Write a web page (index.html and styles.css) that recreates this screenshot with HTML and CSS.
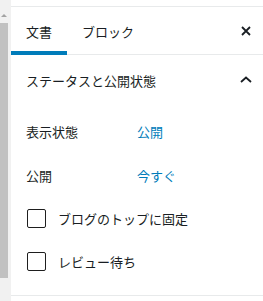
FILE: index.html
```html
<!DOCTYPE html>
<html lang="ja">
<head>
    <meta charset="UTF-8">
    <meta name="viewport" content="width=device-width, initial-scale=1.0">
    <title>文書設定</title>
    <link rel="stylesheet" href="styles.css">
</head>
<body>
    <div class="layout">
        <div class="scrollbar">
            <div class="scroll-arrow"></div>
            <div class="scroll-thumb"></div>
        </div>

        <div class="sidebar">
            <div class="sidebar-header">
                <div class="tabs">
                    <button class="tab active">文書</button>
                    <button class="tab">ブロック</button>
                </div>
                <button class="icon-btn close-btn" aria-label="閉じる">
                    <svg width="10" height="10" viewBox="0 0 10 10">
                        <path d="M1 1 L9 9 M9 1 L1 9" stroke="#191e23" stroke-width="1.8" fill="none"/>
                    </svg>
                </button>
            </div>

            <div class="panel">
                <div class="panel-title">
                    <span>ステータスと公開状態</span>
                    <svg class="chevron" width="12" height="7" viewBox="0 0 12 7">
                        <path d="M1 6 L6 1.5 L11 6" stroke="#191e23" stroke-width="1.8" fill="none"/>
                    </svg>
                </div>
                <div class="panel-body">
                    <div class="row">
                        <span class="row-label">表示状態</span>
                        <a class="row-link" href="#">公開</a>
                    </div>
                    <div class="row">
                        <span class="row-label">公開</span>
                        <a class="row-link" href="#">今すぐ</a>
                    </div>
                    <label class="check-row">
                        <span class="checkbox"></span>
                        ブログのトップに固定
                    </label>
                    <label class="check-row">
                        <span class="checkbox"></span>
                        レビュー待ち
                    </label>
                </div>
            </div>
        </div>
    </div>
</body>
</html>
```

FILE: styles.css
```css
body { margin: 0; font-family: "Noto Sans CJK JP", "Noto Sans", sans-serif; font-size: 13px; color: #191e23; background: #fff; }
.layout { display: flex; height: 301px; overflow: hidden; }

.scrollbar { width: 11px; background: #f1f1f1; display: flex; flex-direction: column; flex-shrink: 0; }
.scroll-arrow { width: 0; height: 0; margin: 14px 0 0 1px; border-left: 3px solid transparent; border-right: 3px solid transparent; border-bottom: 3px solid #a3a3a3; }
.scroll-thumb { width: 8px; height: 255px; margin-top: 6px; background: #c1c1c1; }

.sidebar { flex: 1; padding-top: 6px; }
.sidebar-header { display: flex; justify-content: space-between; align-items: stretch; height: 47px; border-top: 1px solid #e8eaeb; border-bottom: 1px solid #e8eaeb; }
.tabs { display: flex; }
.tab { background: none; border: none; padding: 0 15px; margin-bottom: -1px; font: inherit; color: #191e23; border-bottom: 4px solid transparent; padding-top: 4px; cursor: pointer; }
.tab.active { border-bottom-color: #007cba; }
.icon-btn { background: none; border: none; padding: 0; cursor: pointer; display: flex; align-items: center; justify-content: center; }
.close-btn { width: 24px; margin-right: 5px; padding-top: 1px; }

.panel { border-bottom: 1px solid #e8eaeb; padding-bottom: 12px; }
.panel-title { display: flex; justify-content: space-between; align-items: center; height: 50px; padding: 0 11px 0 15px; }
.chevron { margin-top: -2px; }
.panel-body { padding: 4px 15px 0; }

.row { display: flex; align-items: center; height: 44px; }
.row-label { width: 111px; }
.row-link { color: #007cba; text-decoration: none; }

.check-row { display: flex; align-items: center; height: 43px; padding-left: 1px; cursor: pointer; }
.checkbox { width: 17px; height: 17px; border: 1px solid #1e1e1e; border-radius: 2px; margin-right: 12px; flex-shrink: 0; }
```
